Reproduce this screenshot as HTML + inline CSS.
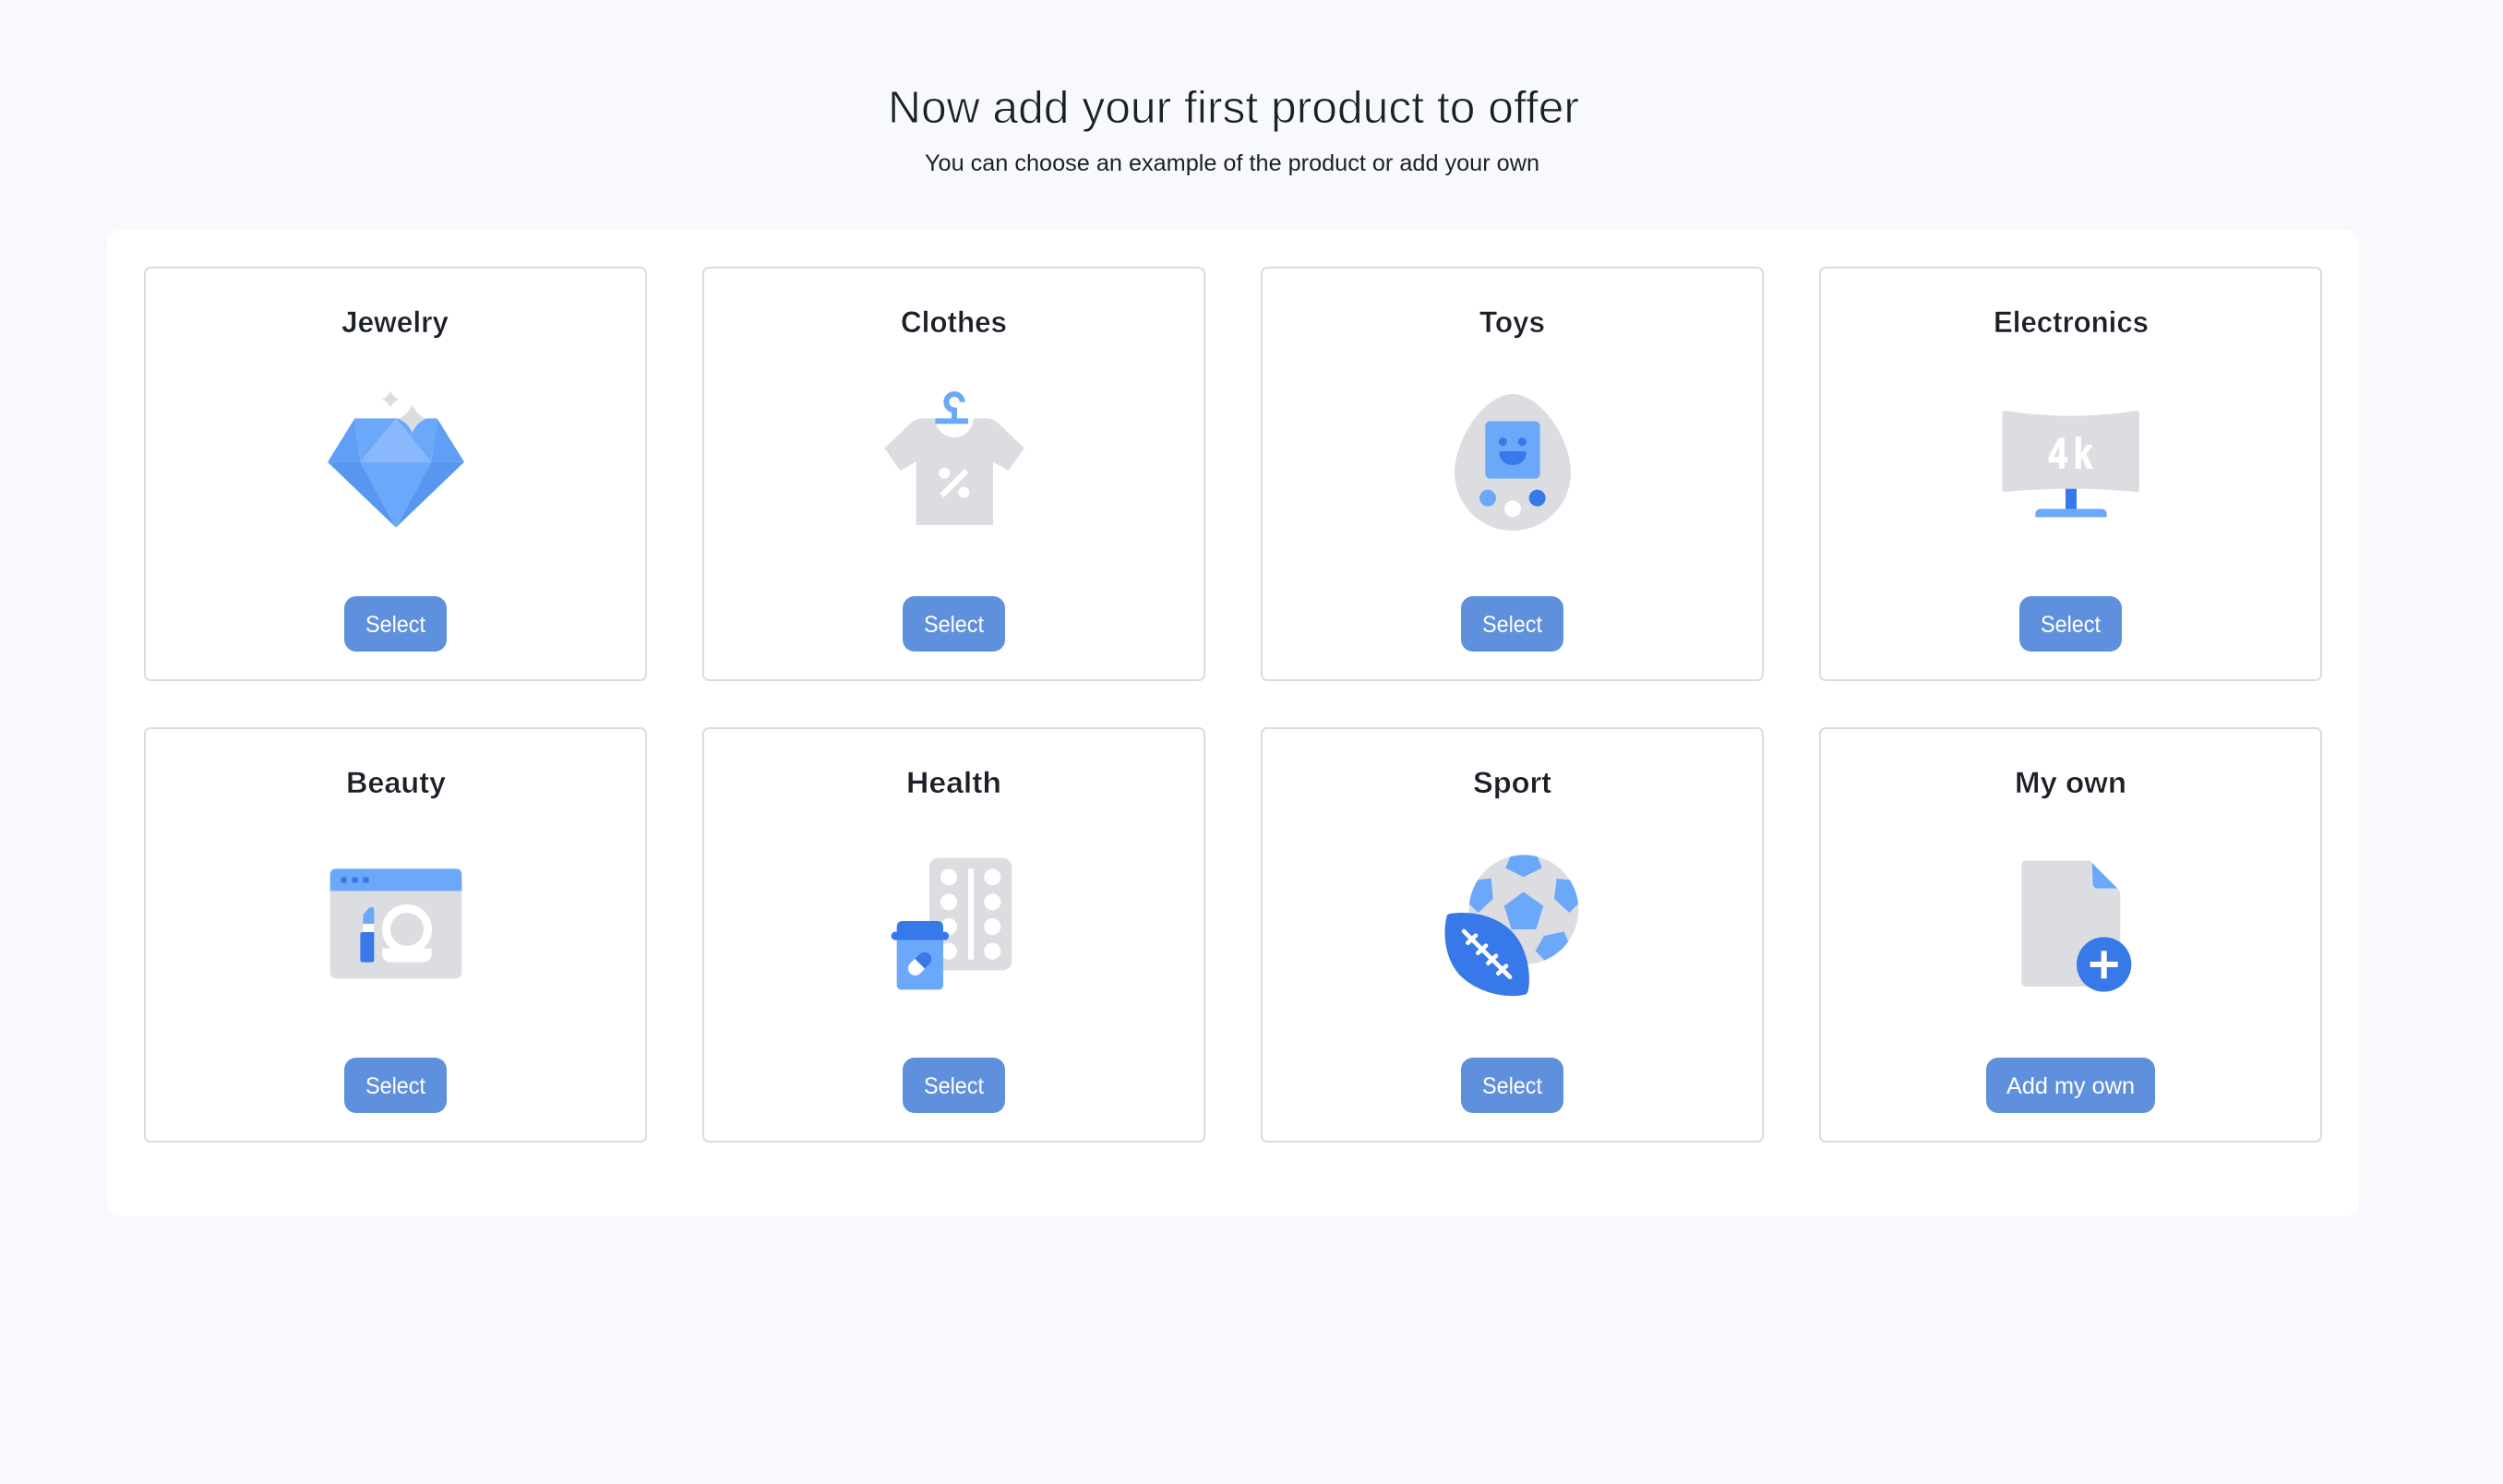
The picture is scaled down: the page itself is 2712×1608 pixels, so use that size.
<!DOCTYPE html>
<html>
<head>
<meta charset="utf-8">
<title>Now add your first product to offer</title>
<style>
html,body{margin:0;padding:0;background:#f8f9fd;}
svg{display:block;}
.h{font-family:"Liberation Sans",sans-serif;font-weight:700;font-size:32px;fill:#1b1f27;stroke:#fff;stroke-width:.5px;}
.b{font-family:"Liberation Sans",sans-serif;font-size:25px;fill:#fff;}
.card{fill:#fff;stroke:#dcdcdc;stroke-width:2;}
.btn{fill:#5f90de;}
</style>
</head>
<body>
<svg xmlns="http://www.w3.org/2000/svg" width="2712" height="1608" viewBox="0 0 2712 1608">
<rect width="2712" height="1608" fill="#f8f9fd"/>
<rect x="116" y="249" width="2440" height="1069" rx="16" fill="#fff"/>

<text x="962" y="133" textLength="749" lengthAdjust="spacingAndGlyphs" font-family="'Liberation Sans',sans-serif" font-size="49" fill="#1b1f27" stroke="#f8f9fd" stroke-width=".9">Now add your first product to offer</text>
<text x="1002" y="185" textLength="666" lengthAdjust="spacingAndGlyphs" font-family="'Liberation Sans',sans-serif" font-size="25" fill="#1b1f27">You can choose an example of the product or add your own</text>

<!-- cards -->
<rect class="card" x="157" y="290" width="543" height="447" rx="6"/>
<rect class="card" x="762" y="290" width="543" height="447" rx="6"/>
<rect class="card" x="1367" y="290" width="543" height="447" rx="6"/>
<rect class="card" x="1972" y="290" width="543" height="447" rx="6"/>
<rect class="card" x="157" y="789" width="543" height="448" rx="6"/>
<rect class="card" x="762" y="789" width="543" height="448" rx="6"/>
<rect class="card" x="1367" y="789" width="543" height="448" rx="6"/>
<rect class="card" x="1972" y="789" width="543" height="448" rx="6"/>

<!-- titles -->
<text class="h" x="370" y="360" textLength="116" lengthAdjust="spacingAndGlyphs">Jewelry</text>
<text class="h" x="976" y="360" textLength="115" lengthAdjust="spacingAndGlyphs">Clothes</text>
<text class="h" x="1603" y="360" textLength="71" lengthAdjust="spacingAndGlyphs">Toys</text>
<text class="h" x="2160" y="360" textLength="168" lengthAdjust="spacingAndGlyphs">Electronics</text>
<text class="h" x="375" y="859" textLength="108" lengthAdjust="spacingAndGlyphs">Beauty</text>
<text class="h" x="982" y="859" textLength="103" lengthAdjust="spacingAndGlyphs">Health</text>
<text class="h" x="1596" y="859" textLength="85" lengthAdjust="spacingAndGlyphs">Sport</text>
<text class="h" x="2183" y="859" textLength="121" lengthAdjust="spacingAndGlyphs">My own</text>

<!-- buttons -->
<rect class="btn" x="373" y="646" width="111" height="60" rx="13"/>
<text class="b" x="396" y="685" textLength="65" lengthAdjust="spacingAndGlyphs">Select</text>
<rect class="btn" x="978" y="646" width="111" height="60" rx="13"/>
<text class="b" x="1001" y="685" textLength="65" lengthAdjust="spacingAndGlyphs">Select</text>
<rect class="btn" x="1583" y="646" width="111" height="60" rx="13"/>
<text class="b" x="1606" y="685" textLength="65" lengthAdjust="spacingAndGlyphs">Select</text>
<rect class="btn" x="2188" y="646" width="111" height="60" rx="13"/>
<text class="b" x="2211" y="685" textLength="65" lengthAdjust="spacingAndGlyphs">Select</text>
<rect class="btn" x="373" y="1146" width="111" height="60" rx="13"/>
<text class="b" x="396" y="1185" textLength="65" lengthAdjust="spacingAndGlyphs">Select</text>
<rect class="btn" x="978" y="1146" width="111" height="60" rx="13"/>
<text class="b" x="1001" y="1185" textLength="65" lengthAdjust="spacingAndGlyphs">Select</text>
<rect class="btn" x="1583" y="1146" width="111" height="60" rx="13"/>
<text class="b" x="1606" y="1185" textLength="65" lengthAdjust="spacingAndGlyphs">Select</text>
<rect class="btn" x="2152" y="1146" width="183" height="60" rx="13"/>
<text class="b" x="2174" y="1185" textLength="139" lengthAdjust="spacingAndGlyphs">Add my own</text>

<!-- Jewelry -->
<g transform="translate(300 380) scale(.33333)">
<polygon points="165,362 253,220 272,362" fill="#609ff5"/>
<polygon points="253,220 387,220 272,362" fill="#6ba8f9"/>
<polygon points="387,220 502,362 272,362" fill="#8ab8fc"/>
<polygon points="387,220 521,220 502,362" fill="#6ba8f9"/>
<polygon points="521,220 609,362 502,362" fill="#609ff5"/>
<polygon points="165,362 272,362 387,575" fill="#5897f0"/>
<polygon points="272,362 502,362 387,575" fill="#6ba8f9"/>
<polygon points="502,362 609,362 387,575" fill="#5897f0"/>
<path d="M440 175 Q453 208 487 221 Q453 234 440 267 Q427 234 393 221 Q427 208 440 175Z" fill="#dcdde0"/>
<path d="M369 131 Q377 150 396 158 Q377 166 369 185 Q361 166 342 158 Q361 150 369 131Z" fill="#dcdde0"/>
</g>

<!-- Clothes -->
<g transform="translate(910 380) scale(.33333)">
<path d="M310 220 A62 62 0 0 0 434 220 H478 Q500 220 515 236 L600 317 L547 390 L498 361 V567 H248 V361 L196 390 L145 317 L230 236 Q245 220 268 220Z" fill="#dcdde0"/>
<path d="M398 167 A26 26 0 1 0 372 193" fill="none" stroke="#6ca8f9" stroke-width="18"/>
<rect x="363" y="185" width="18" height="40" fill="#6ca8f9"/>
<rect x="310" y="220" width="107" height="18" fill="#6ca8f9"/>
<circle cx="340" cy="398" r="18" fill="#fff"/>
<circle cx="403" cy="461" r="18" fill="#fff"/>
<line x1="412" y1="390" x2="331" y2="471" stroke="#fff" stroke-width="18"/>
</g>

<!-- Toys -->
<g transform="translate(1510 380) scale(.33333)">
<path d="M387 141 C480 141 576 290 576 395 C576 500 492 585 387 585 C282 585 198 500 198 395 C198 290 294 141 387 141Z" fill="#dcdde0"/>
<rect x="298" y="229" width="178" height="187" rx="16" fill="#6ca8f9"/>
<circle cx="355" cy="296" r="13.5" fill="#3779e8"/>
<circle cx="418" cy="296" r="13.5" fill="#3779e8"/>
<path d="M349 327 H425 Q431 327 431 333 A44 39 0 0 1 343 333 Q343 327 349 327Z" fill="#3779e8"/>
<circle cx="306" cy="479" r="27" fill="#6ca8f9"/>
<circle cx="467" cy="479" r="27" fill="#3779e8"/>
<circle cx="387" cy="514" r="27" fill="#fff"/>
</g>

<!-- Electronics -->
<g transform="translate(2100 380) scale(.33333)">
<path d="M218 195 Q431 229 644 195 Q654 194 654 204 V450 Q654 460 644 459 Q431 439 218 459 Q208 460 208 450 V204 Q208 194 218 195Z" fill="#dcdde0"/>
<g transform="translate(359 381) scale(.78 1)">
<text x="0 104" y="0" font-family="'Liberation Sans',sans-serif" font-weight="700" font-size="140" fill="#fff" stroke="#fff" stroke-width="4">4k</text>
</g>
<rect x="414" y="449" width="36" height="66" fill="#3779e8"/>
<path d="M316 541 V532 Q316 514 336 514 H528 Q548 514 548 532 V541Z" fill="#6ca8f9"/>
</g>

<!-- Beauty -->
<g transform="translate(300 900) scale(.33333)">
<rect x="173" y="124" width="428" height="357" rx="20" fill="#dcdde0"/>
<path d="M173 196 V144 Q173 124 193 124 H581 Q601 124 601 144 V196Z" fill="#6ca8f9"/>
<rect x="208" y="151" width="19" height="19" rx="3" fill="#3779e8"/>
<rect x="244" y="151" width="19" height="19" rx="3" fill="#3779e8"/>
<rect x="280" y="151" width="19" height="19" rx="3" fill="#3779e8"/>
<path d="M280 303 V274 L298 252 Q302 249 308 249 Q316 249 316 257 V303Z" fill="#6ca8f9"/>
<rect x="280" y="303" width="36" height="27" fill="#fff"/>
<path d="M279 330 H316 V420 Q316 428 308 428 H279 Q271 428 271 420 V338 Q271 330 279 330Z" fill="#3779e8"/>
<circle cx="423" cy="321" r="67.5" fill="none" stroke="#fff" stroke-width="27"/>
<path d="M342 383 H503 V398 Q503 428 473 428 H372 Q342 428 342 398Z" fill="#fff"/>
</g>

<!-- Health -->
<g transform="translate(910 900) scale(.33333)">
<rect x="291" y="89" width="268" height="365" rx="30" fill="#dcdde0"/>
<g fill="#fff">
<circle cx="354" cy="151" r="27"/><circle cx="354" cy="232" r="27"/><circle cx="354" cy="312" r="27"/><circle cx="354" cy="392" r="27"/>
<circle cx="496" cy="151" r="27"/><circle cx="496" cy="232" r="27"/><circle cx="496" cy="312" r="27"/><circle cx="496" cy="392" r="27"/>
<rect x="417" y="124" width="18" height="295"/>
</g>
<rect x="185" y="330" width="151" height="187" rx="14" fill="#6ca8f9"/>
<path d="M185 345 V314 Q185 294 205 294 H316 Q336 294 336 314 V345Z" fill="#3779e8"/>
<rect x="167" y="329" width="187" height="27" rx="13" fill="#3779e8"/>
<line x1="245" y1="448" x2="275" y2="418" stroke="#fff" stroke-width="46" stroke-linecap="round"/>
<path d="M243.700 416.700 L258.700 401.700 A23 23 0 0 1 291.300 434.300 L276.300 449.300Z" fill="#3779e8"/>
</g>

<!-- Sport -->
<g transform="translate(1510 900) scale(.33333)">
<defs><clipPath id="ball"><circle cx="423" cy="257" r="178"/></clipPath></defs>
<circle cx="423" cy="257" r="178" fill="#dcdde0"/>
<g clip-path="url(#ball)" fill="#6ca8f9">
<polygon points="385,70 462,70 482,122 422,151 364,122"/>
<polygon points="260,162 317,155 323,222 275,267 235,228"/>
<polygon points="530,156 590,162 612,226 571,267 522,222"/>
<polygon points="422,199 487,245 463,321 383,321 359,245"/>
<polygon points="489,342 554,328 575,380 498,430 461,391"/>
</g>
<path d="M183 270 C270 258 350 285 395 340 C435 390 448 470 437 522 Q435 530 427 533 C360 548 270 525 215 470 C170 420 158 345 172 280 Q174 272 183 270Z" fill="#3779e8"/>
<g stroke="#fff" stroke-width="14" stroke-linecap="round" fill="none">
<line x1="228" y1="327" x2="378" y2="476"/>
<line x1="241" y1="365" x2="267" y2="341"/>
<line x1="274" y1="398" x2="300" y2="374"/>
<line x1="307" y1="431" x2="333" y2="407"/>
<line x1="340" y1="464" x2="366" y2="440"/>
</g>
</g>

<!-- My own -->
<g transform="translate(2100 900) scale(.33333)">
<path d="M287 98 H490 Q497 98 500 105 V168 Q500 188 520 188 H583 Q592 196 592 208 V491 Q592 507 576 507 H287 Q271 507 271 491 V114 Q271 98 287 98Z" fill="#dcdde0"/>
<path d="M500 105 L583 188 H520 Q502 188 502 170Z" fill="#6ca8f9"/>
<circle cx="539" cy="435" r="89" fill="#3779e8"/>
<rect x="494" y="426" width="90" height="18" fill="#fff"/>
<rect x="530" y="391" width="18" height="90" fill="#fff"/>
</g>
</svg>
</body>
</html>
